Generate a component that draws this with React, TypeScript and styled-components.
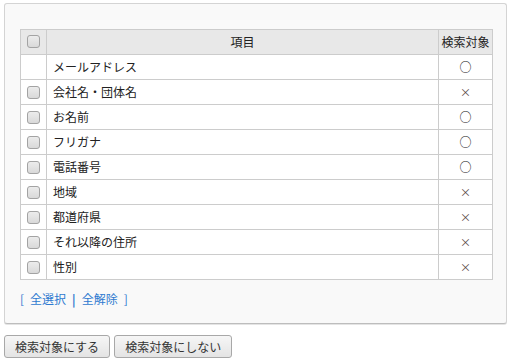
import React from "react";
import styled, { createGlobalStyle } from "styled-components";

type Mark = "o" | "x";

const items: { label: string; mark: Mark; checkable: boolean }[] = [
  { label: "メールアドレス", mark: "o", checkable: false },
  { label: "会社名・団体名", mark: "x", checkable: true },
  { label: "お名前", mark: "o", checkable: true },
  { label: "フリガナ", mark: "o", checkable: true },
  { label: "電話番号", mark: "o", checkable: true },
  { label: "地域", mark: "x", checkable: true },
  { label: "都道府県", mark: "x", checkable: true },
  { label: "それ以降の住所", mark: "x", checkable: true },
  { label: "性別", mark: "x", checkable: true },
];

const App = () => {
  return (
    <>
      <GlobalStyle />
      <Page>
        <Panel>
          <Table>
            <thead>
              <tr>
                <HeadCell $w={26}>
                  <Check />
                </HeadCell>
                <HeadCell>項目</HeadCell>
                <HeadCell $w={54}>検索対象</HeadCell>
              </tr>
            </thead>
            <tbody>
              {items.map((item) => (
                <tr key={item.label}>
                  <CheckCell>{item.checkable && <Check />}</CheckCell>
                  <LabelCell>{item.label}</LabelCell>
                  <MarkCell $mark={item.mark}>
                    {item.mark === "o" ? "○" : "×"}
                  </MarkCell>
                </tr>
              ))}
            </tbody>
          </Table>
          <Links>
            <span>[</span>
            <a href="#">全選択</a>
            <Bar>|</Bar>
            <a href="#">全解除</a>
            <span>]</span>
          </Links>
        </Panel>
        <Actions>
          <Button>検索対象にする</Button>
          <Button>検索対象にしない</Button>
        </Actions>
      </Page>
    </>
  );
};

export default App;

const GlobalStyle = createGlobalStyle`
  body {
    margin: 0;
    background: #fff;
    font-family: "Noto Sans CJK JP", "Noto Sans", sans-serif;
    font-size: 12px;
    color: #222;
  }
`;

const Page = styled.div`
  padding: 3px 4px;
`;

const Panel = styled.div`
  box-sizing: border-box;
  width: 503px;
  height: 321px;
  padding: 25px 14px 0 15px;
  background: #f9f9f9;
  border: 1px solid #d4d4d4;
  border-bottom-color: #bdbdbd;
  border-radius: 3px;
  box-shadow: 0 1px 0 #e4e4e4;
`;

const Table = styled.table`
  width: 473px;
  border-collapse: collapse;
  background: #fff;
  table-layout: fixed;

  td,
  th {
    border: 1px solid #cccccc;
    height: 25px;
    padding: 0;
    box-sizing: border-box;
  }
`;

const HeadCell = styled.th<{ $w?: number }>`
  width: ${(p) => (p.$w ? `${p.$w}px` : "auto")};
  background: #e8e8e8;
  font-weight: normal;
  text-align: center;
  vertical-align: middle;
  line-height: 1;
`;

const CheckCell = styled.td`
  text-align: center;
  vertical-align: middle;
  line-height: 0;
`;

const LabelCell = styled.td`
  padding-left: 6px !important;
  vertical-align: middle;
  line-height: 1;
`;

const MarkCell = styled.td<{ $mark: Mark }>`
  text-align: center;
  vertical-align: middle;
  line-height: 1;
  font-size: ${(p) => (p.$mark === "o" ? "12px" : "11px")};
  color: ${(p) => (p.$mark === "o" ? "#111" : "#5a4a44")};
`;

const Check = styled.span`
  display: inline-block;
  box-sizing: border-box;
  width: 13px;
  height: 13px;
  border: 1px solid #a3a3a3;
  border-radius: 3px;
  background: linear-gradient(#ececec, #d9d9d9);
`;

const Links = styled.div`
  display: flex;
  align-items: center;
  gap: 6px;
  margin-top: 11px;
  color: #2f7ad0;
  line-height: 16px;

  a {
    color: #2f7ad0;
    text-decoration: none;
  }
`;

const Bar = styled.span`
  font-weight: bold;
`;

const Actions = styled.div`
  display: flex;
  gap: 4px;
  margin-top: 11px;
`;

const Button = styled.button`
  box-sizing: border-box;
  height: 23px;
  padding: 0 10px;
  font-family: inherit;
  font-size: 12px;
  color: #333;
  background: linear-gradient(#f6f6f6, #e4e4e4);
  border: 1px solid #a8a8a8;
  border-radius: 3px;
`;
